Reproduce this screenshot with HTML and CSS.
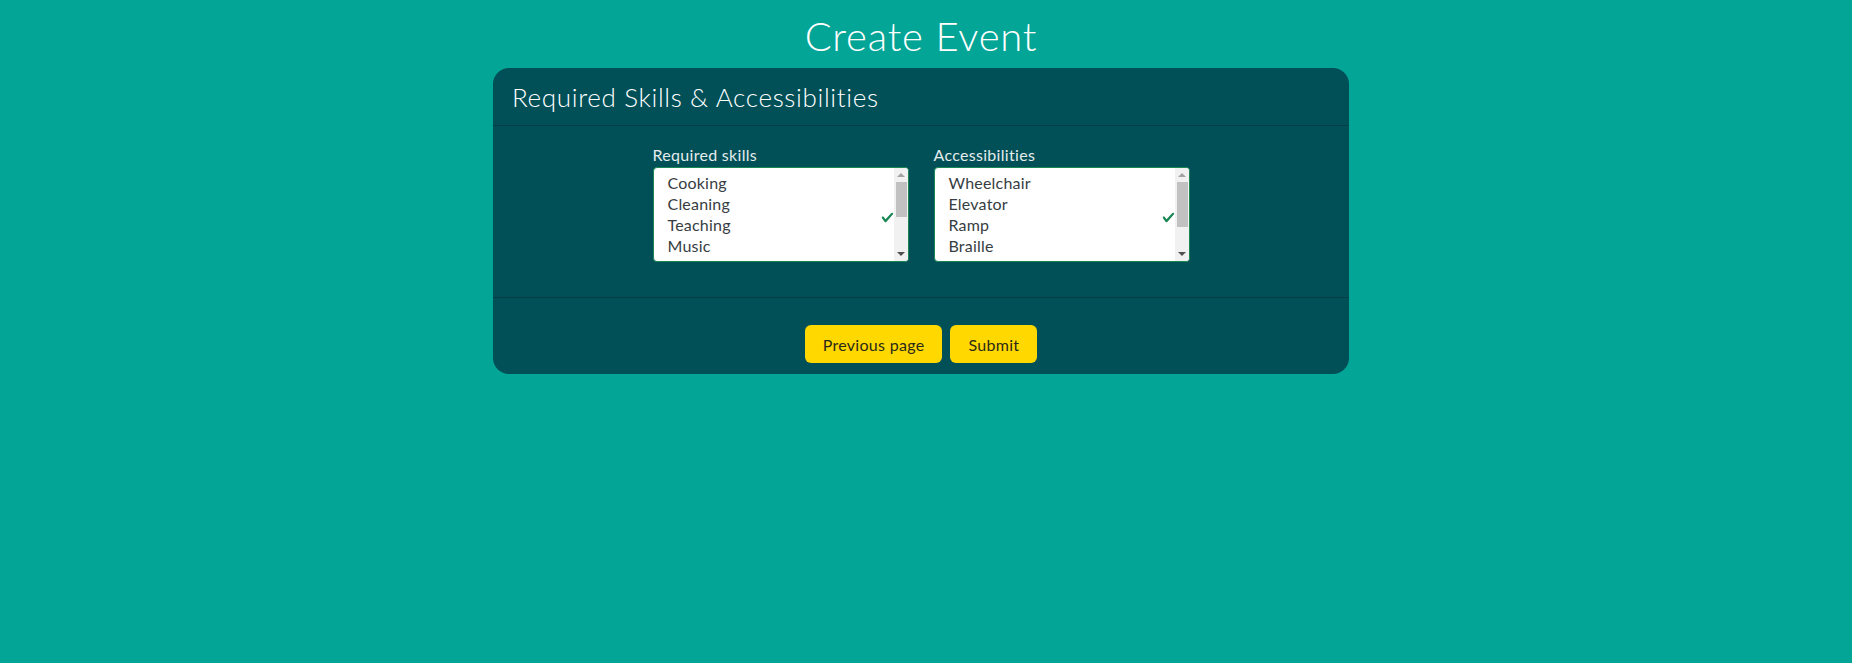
FILE: index.html
```html
<!DOCTYPE html>
<html lang="en">
<head>
<meta charset="utf-8">
<title>Create Event</title>
<link rel="stylesheet" href="styles.css">
</head>
<body>
<main class="page">
  <h1 class="title">Create Event</h1>
  <section class="card">
    <header class="card-header">Required Skills &amp; Accessibilities</header>
    <div class="card-body">
      <div class="field">
        <span class="field-label" id="skills-label">Required skills</span>
        <div class="listbox" role="listbox" aria-multiselectable="true" aria-labelledby="skills-label">
          <div class="options">
            <div class="option" role="option">Cooking</div>
            <div class="option" role="option">Cleaning</div>
            <div class="option" role="option">Teaching</div>
            <div class="option" role="option">Music</div>
            <div class="option" role="option">Art</div>
          </div>
          <div class="scrollbar">
            <span class="sb-btn sb-up"></span>
            <div class="sb-track"><span class="sb-thumb" style="height:35px"></span></div>
            <span class="sb-btn sb-down"></span>
          </div>
          <svg class="valid-icon" viewBox="0 0 8 8" aria-hidden="true"><path fill="#198754" d="M2.3 6.73.6 4.53c-.4-1.04.46-1.4 1.1-.8l1.1 1.4 3.4-3.8c.6-.63 1.6-.27 1.2.7l-4 4.6c-.43.5-.8.4-1.1.1z"/></svg>
        </div>
      </div>
      <div class="field">
        <span class="field-label" id="access-label">Accessibilities</span>
        <div class="listbox" role="listbox" aria-multiselectable="true" aria-labelledby="access-label">
          <div class="options">
            <div class="option" role="option">Wheelchair</div>
            <div class="option" role="option">Elevator</div>
            <div class="option" role="option">Ramp</div>
            <div class="option" role="option">Braille</div>
            <div class="option" role="option">Sign language</div>
          </div>
          <div class="scrollbar">
            <span class="sb-btn sb-up"></span>
            <div class="sb-track"><span class="sb-thumb" style="height:45px"></span></div>
            <span class="sb-btn sb-down"></span>
          </div>
          <svg class="valid-icon" viewBox="0 0 8 8" aria-hidden="true"><path fill="#198754" d="M2.3 6.73.6 4.53c-.4-1.04.46-1.4 1.1-.8l1.1 1.4 3.4-3.8c.6-.63 1.6-.27 1.2.7l-4 4.6c-.43.5-.8.4-1.1.1z"/></svg>
        </div>
      </div>
    </div>
    <footer class="card-footer">
      <button class="btn" type="button">Previous page</button>
      <button class="btn" type="submit">Submit</button>
    </footer>
  </section>
</main>
</body>
</html>
```

FILE: styles.css
```css
html, body {
  margin: 0;
  padding: 0;
}

body {
  background: #03a596;
  font-family: Lato, "Open Sans", sans-serif;
  color: #ffffff;
}

.page {
  width: 1842px;
  display: flex;
  flex-direction: column;
  align-items: center;
}

.title {
  margin: 12px 0 8px;
  font-size: 40px;
  line-height: 48px;
  font-weight: 300;
  letter-spacing: 0.8px;
  color: #ffffff;
}

.card {
  width: 856px;
  background: #014f57;
  border-radius: 16px;
  overflow: hidden;
}

.card-header {
  height: 57px;
  padding: 0 19px;
  display: flex;
  align-items: center;
  font-size: 26px;
  font-weight: 300;
  letter-spacing: 0.65px;
  color: #ffffff;
  border-bottom: 1px solid #013f46;
}

.card-body {
  display: flex;
  justify-content: center;
  gap: 25px;
  padding: 17px 0 35px;
  border-bottom: 1px solid #013f46;
}

.field {
  display: flex;
  flex-direction: column;
  width: 256px;
}

.field-label {
  font-size: 16px;
  line-height: 24px;
  letter-spacing: 0.3px;
  color: #e3ecec;
}

.listbox {
  position: relative;
  display: flex;
  height: 95px;
  box-sizing: border-box;
  border: 1px solid #198754;
  border-radius: 4px;
  background: #ffffff;
  overflow: hidden;
}

.options {
  flex: 1;
  overflow: hidden;
  padding: 4px 0 0 14px;
}

.option {
  font-size: 16px;
  line-height: 21px;
  letter-spacing: 0.2px;
  color: #373d42;
  white-space: nowrap;
}

.scrollbar {
  width: 14px;
  display: flex;
  flex-direction: column;
  background: #f1f1f1;
}

.sb-btn {
  height: 14px;
  display: flex;
  align-items: center;
  justify-content: center;
}

.sb-btn::before {
  content: "";
  width: 0;
  height: 0;
  border-left: 4px solid transparent;
  border-right: 4px solid transparent;
}

.sb-up::before {
  border-bottom: 4px solid #a3a3a3;
}

.sb-down::before {
  border-top: 4px solid #505050;
}

.sb-track {
  flex: 1;
  padding: 0 1px 0 2px;
}

.sb-thumb {
  display: block;
  background: #c1c1c1;
}

.valid-icon {
  position: absolute;
  right: 14px;
  top: 43px;
  width: 13px;
  height: 13px;
}

.card-footer {
  display: flex;
  justify-content: center;
  gap: 8px;
  padding: 27px 0 11px;
}

.btn {
  height: 38px;
  padding: 0 18px;
  border: none;
  border-radius: 6px;
  background: #ffd800;
  color: #2a2a1a;
  font-family: Lato, "Open Sans", sans-serif;
  font-size: 16px;
  letter-spacing: 0.3px;
  cursor: pointer;
}
```
